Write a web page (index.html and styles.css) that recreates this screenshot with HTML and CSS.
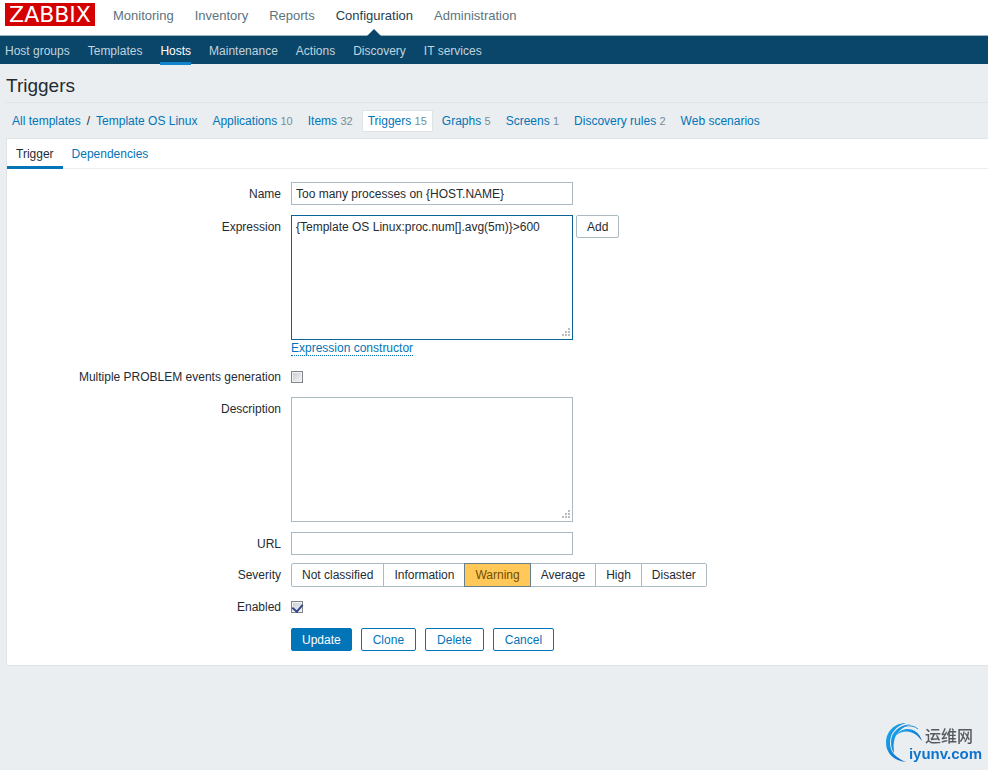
FILE: index.html
```html
<!DOCTYPE html>
<html lang="en">
<head>
    <meta charset="UTF-8">
    <meta name="viewport" content="width=device-width, initial-scale=1.0">
    <title>Configuration of triggers</title>
    <link rel="stylesheet" href="styles.css">
</head>
<body>
    <header class="header">
        <a href="#" class="logo">ZABBIX</a>
        <nav class="top-nav">
            <a href="#">Monitoring</a>
            <a href="#">Inventory</a>
            <a href="#">Reports</a>
            <a href="#" class="selected">Configuration</a>
            <a href="#">Administration</a>
        </nav>
    </header>
    <nav class="sub-nav">
        <a href="#">Host groups</a>
        <a href="#">Templates</a>
        <a href="#" class="selected">Hosts</a>
        <a href="#">Maintenance</a>
        <a href="#">Actions</a>
        <a href="#">Discovery</a>
        <a href="#">IT services</a>
    </nav>

    <main class="article">
        <h1>Triggers</h1>

        <div class="object-nav">
            <div class="crumbs">
                <a href="#">All templates</a>
                <span>/</span>
                <a href="#">Template OS Linux</a>
            </div>
            <a href="#">Applications <sup>10</sup></a>
            <a href="#">Items <sup>32</sup></a>
            <a href="#" class="selected">Triggers <sup>15</sup></a>
            <a href="#">Graphs <sup>5</sup></a>
            <a href="#">Screens <sup>1</sup></a>
            <a href="#">Discovery rules <sup>2</sup></a>
            <a href="#">Web scenarios</a>
        </div>

        <form class="panel">
            <div class="tabs">
                <a href="#" class="selected">Trigger</a>
                <a href="#">Dependencies</a>
            </div>

            <div class="form">
                <div class="row">
                    <label for="name">Name</label>
                    <input type="text" id="name" class="field" value="Too many processes on {HOST.NAME}">
                </div>
                <div class="row">
                    <label for="expression">Expression</label>
                    <div>
                        <div class="with-button">
                            <textarea id="expression" class="field active" spellcheck="false">{Template OS Linux:proc.num[].avg(5m)}&gt;600</textarea>
                            <button type="button" class="btn-grey">Add</button>
                        </div>
                        <a href="#" class="link-dotted">Expression constructor</a>
                    </div>
                </div>
                <div class="row row-check">
                    <label for="multiple">Multiple PROBLEM events generation</label>
                    <input type="checkbox" id="multiple">
                </div>
                <div class="row">
                    <label for="description">Description</label>
                    <textarea id="description" class="field"></textarea>
                </div>
                <div class="row">
                    <label for="url">URL</label>
                    <input type="text" id="url" class="field">
                </div>
                <div class="row row-severity">
                    <span class="label" id="severity-label">Severity</span>
                    <div class="severity" role="radiogroup" aria-labelledby="severity-label">
                        <input type="radio" name="severity" id="sev0"><label for="sev0">Not classified</label>
                        <input type="radio" name="severity" id="sev1"><label for="sev1">Information</label>
                        <input type="radio" name="severity" id="sev2" checked><label for="sev2">Warning</label>
                        <input type="radio" name="severity" id="sev3"><label for="sev3">Average</label>
                        <input type="radio" name="severity" id="sev4"><label for="sev4">High</label>
                        <input type="radio" name="severity" id="sev5"><label for="sev5">Disaster</label>
                    </div>
                </div>
                <div class="row row-check">
                    <label for="enabled">Enabled</label>
                    <input type="checkbox" id="enabled" checked>
                </div>
                <div class="row">
                    <span></span>
                    <div class="buttons">
                        <button type="button" class="btn-main">Update</button>
                        <button type="button">Clone</button>
                        <button type="button">Delete</button>
                        <button type="button">Cancel</button>
                    </div>
                </div>
            </div>
        </form>
    </main>

    <!-- site mark in the corner -->
    <div class="site-mark">
        <svg width="38" height="41" viewBox="0 0 38 41" aria-hidden="true">
            <defs>
                <linearGradient id="swoosh" x1="0" y1="0" x2="1" y2="1">
                    <stop offset="0" stop-color="#1cb0f2"/>
                    <stop offset="1" stop-color="#0b62c4"/>
                </linearGradient>
            </defs>
            <path fill="url(#swoosh)" d="M21 1C9 1 1 10 1 21c0 10 8 18 20 19C11 36 5 30 5 21 5 11 11 4 21 1z"/>
            <path fill="url(#swoosh)" d="M26 2C14 3 6 10 6 20c0 5 1 8 3 11 0-4-1-7 0-11C10 12 16 5 26 2z"/>
            <path fill="url(#swoosh)" d="M10 14C18 3 33 5 37 19 30 9 20 6 10 14z"/>
            <path fill="none" stroke="#1b8fdc" d="M12 9C18 3 27 2 33 7"/>
        </svg>
        <div class="site-mark-text">
            <span class="site-mark-name">运维网</span>
            <span class="site-mark-domain">iyunv.com</span>
        </div>
    </div>
</body>
</html>
```
FILE: styles.css
```css
* {
    box-sizing: border-box;
}

body {
    margin: 0;
    min-height: 100vh;
    background-color: #ebeef0;
    color: #1f2c33;
    font-family: "Liberation Sans", Arial, sans-serif;
    font-size: 12px;
    line-height: 16px;
}

a {
    color: #0275b8;
    text-decoration: none;
}

.header {
    display: flex;
    align-items: flex-start;
    gap: 18px;
    height: 36px;
    padding: 3px 5px 0;
    background-color: #fff;
    border-bottom: 1px solid #9db5c3;
}

.logo {
    width: 90px;
    height: 23px;
    background-color: #d40000;
    color: #fff;
    font-family: "DejaVu Sans", sans-serif;
    font-size: 22px;
    line-height: 23px;
    text-align: center;
}

.top-nav {
    display: flex;
    gap: 21px;
    font-size: 13px;
    line-height: 25px;
}

.top-nav a {
    position: relative;
    height: 33px;
    color: #5c7380;
}

.top-nav .selected {
    color: #1f3f52;
}

.top-nav .selected::after {
    content: "";
    position: absolute;
    left: 50%;
    bottom: 0;
    margin-left: -7px;
    border: 7px solid transparent;
    border-top: 0;
    border-bottom-color: #0a466a;
}

.sub-nav {
    display: flex;
    gap: 18px;
    height: 28px;
    padding: 0 5px;
    background-color: #0a466a;
    line-height: 30px;
}

.sub-nav a {
    height: 29px;
    color: #c2d3dd;
}

.sub-nav .selected {
    color: #fff;
    border-bottom: 3px solid #0f85cc;
}

.article {
    padding-left: 6px;
}

h1 {
    margin: 0;
    padding: 10px 0 4px;
    border-bottom: 1px solid #dfe4e7;
    font-size: 19px;
    font-weight: normal;
    line-height: 24px;
}

.object-nav {
    display: flex;
    gap: 3px;
    padding: 7px 0 6px;
}

.crumbs {
    display: flex;
    line-height: 22px;
}

.object-nav a {
    padding: 0 5px;
    border: 1px solid transparent;
    line-height: 20px;
}

.object-nav .selected {
    background-color: #fff;
    border-color: #dfe4e7;
}

.object-nav sup {
    color: #768d99;
    font-size: 11px;
    line-height: 1;
    vertical-align: baseline;
}

.panel {
    background-color: #fff;
    border: 1px solid #dfe4e7;
    border-right: 0;
}

.tabs {
    display: flex;
    height: 30px;
    border-bottom: 1px solid #ebeef0;
    line-height: 30px;
}

.tabs a {
    height: 30px;
    padding: 0 9px;
}

.tabs .selected {
    color: #1f2c33;
    border-bottom: 3px solid #0275b8;
}

.form {
    display: flex;
    flex-direction: column;
    gap: 10px;
    padding: 13px 0 14px;
}

.row {
    display: grid;
    grid-template-columns: 274px 1fr;
    column-gap: 10px;
}

.row > label,
.label {
    padding-top: 4px;
    text-align: right;
}

.row-check {
    align-items: center;
    height: 20px;
}

.row-check > label {
    padding-top: 0;
}

.row-severity {
    margin-top: -2px;
}

.field {
    width: 282px;
    height: 23px;
    margin: 0;
    padding: 0 4px;
    border: 1px solid #acbbc2;
    background-color: #fff;
    color: #1f2c33;
    font: inherit;
    outline: 0;
}

textarea.field {
    display: block;
    height: 125px;
    padding-top: 3px;
    resize: both;
}

.field.active {
    border-color: #0a6496;
}

/* dotted resize corner */
textarea::-webkit-resizer {
    background:
        linear-gradient(to left, #fff 2px, transparent 2px),
        linear-gradient(to top, #fff 2px, transparent 2px),
        linear-gradient(135deg, #fff 52%, transparent 52%),
        conic-gradient(at 1px 2px, #bcbcbc 25%, transparent 0) right 2px bottom 2px / 3px 3px;
}

.with-button {
    display: flex;
    align-items: flex-start;
    gap: 3px;
}

.link-dotted {
    display: inline-block;
    height: 16px;
    margin-bottom: 1px;
    border-bottom: 1px dotted #0275b8;
    vertical-align: top;
}

input[type="checkbox"] {
    appearance: none;
    display: grid;
    place-items: center;
    width: 12px;
    height: 12px;
    margin: 0;
    border: 1px solid #808488;
    background: linear-gradient(135deg, #c6cbd2, #f6f6f6);
    box-shadow: inset 0 0 0 1px #f2f2f2;
}

input[type="checkbox"]:checked::before {
    content: "";
    width: 5px;
    height: 8px;
    margin-bottom: 2px;
    border: solid #34478f;
    border-width: 0 2px 2px 0;
    transform: rotate(40deg);
}

.severity {
    display: flex;
    height: 24px;
}

.severity input {
    appearance: none;
    width: 0;
    height: 0;
    margin: 0;
}

.severity label {
    padding: 0 10px;
    border: 1px solid #acbbc2;
    line-height: 22px;
}

.severity label + input + label {
    margin-left: -1px;
}

.severity label:first-of-type {
    border-radius: 2px 0 0 2px;
}

.severity label:last-of-type {
    border-radius: 0 2px 2px 0;
}

.severity input:checked + label {
    z-index: 1;
    background-color: #ffc859;
    border-color: #66808f;
    color: #734d00;
}

button {
    height: 23px;
    padding: 0 11px;
    border: 1px solid #0275b8;
    border-radius: 2px;
    background-color: #fff;
    color: #0275b8;
    font: inherit;
    cursor: pointer;
}

.btn-grey {
    padding: 0 10px;
    border-color: #acbbc2;
    color: #1f2c33;
}

.btn-main {
    padding: 0 10px;
    background-color: #0275b8;
    color: #fff;
}

.buttons {
    display: flex;
    gap: 9px;
    padding-top: 1px;
}

.site-mark {
    position: fixed;
    right: 6px;
    bottom: 6px;
    display: flex;
}

.site-mark-text {
    display: flex;
    flex-direction: column;
    margin-left: -14px;
}

.site-mark-name {
    padding: 4px 0 0 16px;
    color: #555b61;
    font-family: "Noto Sans CJK SC", sans-serif;
    font-size: 16px;
    font-weight: 500;
    line-height: 18px;
}

.site-mark-domain {
    color: #0f74cc;
    font-size: 15px;
    font-weight: bold;
    line-height: 20px;
}
```
